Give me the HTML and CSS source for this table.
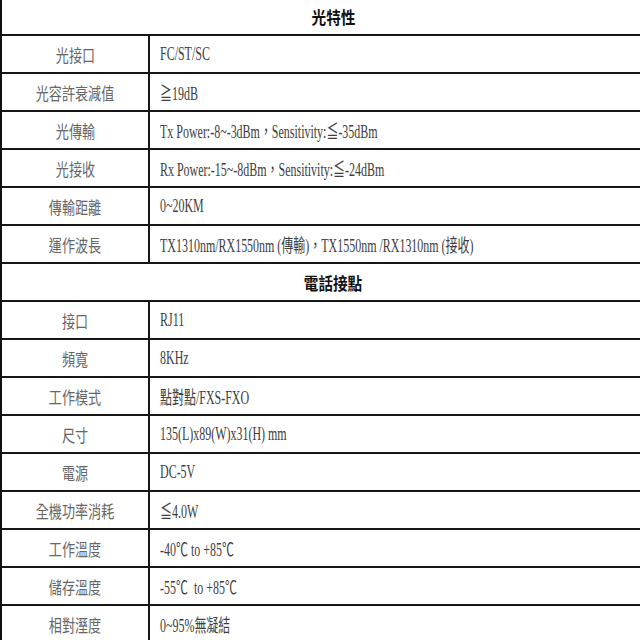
FILE: index.html
```html
<!DOCTYPE html>
<html lang="zh-Hant">
<head>
<meta charset="utf-8">
<link rel="stylesheet" href="styles.css">
</head>
<body>
<div class="spec">
  <div class="row head"><span class="sq-h">光特性</span></div>
  <div class="row"><div class="lbl"><span class="sq-c">光接口</span></div><div class="val"><span class="sq">FC/ST/SC</span></div></div>
  <div class="row"><div class="lbl"><span class="sq-c">光容許衰減值</span></div><div class="val"><span class="sq">≧19dB</span></div></div>
  <div class="row"><div class="lbl"><span class="sq-c">光傳輸</span></div><div class="val"><span class="sq">Tx Power:-8~-3dBm，Sensitivity:≦-35dBm</span></div></div>
  <div class="row"><div class="lbl"><span class="sq-c">光接收</span></div><div class="val"><span class="sq">Rx Power:-15~-8dBm，Sensitivity:≦-24dBm</span></div></div>
  <div class="row"><div class="lbl"><span class="sq-c">傳輸距離</span></div><div class="val"><span class="sq">0~20KM</span></div></div>
  <div class="row"><div class="lbl"><span class="sq-c">運作波長</span></div><div class="val"><span class="sq">TX1310nm/RX1550nm (傳輸)，TX1550nm /RX1310nm (接收)</span></div></div>
  <div class="row head"><span class="sq-h">電話接點</span></div>
  <div class="row"><div class="lbl"><span class="sq-c">接口</span></div><div class="val"><span class="sq">RJ11</span></div></div>
  <div class="row"><div class="lbl"><span class="sq-c">頻寬</span></div><div class="val"><span class="sq">8KHz</span></div></div>
  <div class="row"><div class="lbl"><span class="sq-c">工作模式</span></div><div class="val"><span class="sq">點對點/FXS-FXO</span></div></div>
  <div class="row"><div class="lbl"><span class="sq-c">尺寸</span></div><div class="val"><span class="sq">135(L)x89(W)x31(H) mm</span></div></div>
  <div class="row"><div class="lbl"><span class="sq-c">電源</span></div><div class="val"><span class="sq">DC-5V</span></div></div>
  <div class="row"><div class="lbl"><span class="sq-c">全機功率消耗</span></div><div class="val"><span class="sq">≦4.0W</span></div></div>
  <div class="row"><div class="lbl"><span class="sq-c">工作溫度</span></div><div class="val"><span class="sq">-40℃ to +85℃</span></div></div>
  <div class="row"><div class="lbl"><span class="sq-c">儲存溫度</span></div><div class="val"><span class="sq">-55℃&nbsp; to +85℃</span></div></div>
  <div class="row"><div class="lbl"><span class="sq-c">相對溼度</span></div><div class="val"><span class="sq">0~95%無凝結</span></div></div>
</div>
</body>
</html>
```
FILE: styles.css
```css
html, body {
  margin: 0;
  padding: 0;
  background: #ffffff;
  overflow: hidden;
}
.spec {
  width: 662px;
  margin-top: -4px;
  border-left: 2px solid #111;
  border-top: 2px solid #111;
  font-family: "Liberation Serif", "Noto Sans CJK TC", serif;
  font-size: 18px;
  color: #3e3e3e;
}
.row {
  display: flex;
  height: 38px;
  box-sizing: border-box;
  border-bottom: 2px solid #161616;
}
.row.head {
  align-items: center;
  justify-content: center;
  font-family: "Noto Sans CJK TC", "Liberation Sans", sans-serif;
  font-weight: 700;
  color: #111;
  font-size: 17px;
}
.lbl {
  width: 148px;
  flex: none;
  border-right: 2px solid #161616;
  display: flex;
  align-items: center;
  justify-content: center;
  color: #666;
  padding-top: 1px;
  box-sizing: border-box;
}
.val {
  flex: 1;
  display: flex;
  align-items: center;
  padding-left: 10px;
  white-space: nowrap;
}
.sq {
  display: inline-block;
  transform: scaleX(0.665);
  transform-origin: left center;
}
.sq-c {
  display: inline-block;
  font-size: 17px;
  transform: scaleX(0.77);
  transform-origin: center center;
  white-space: nowrap;
}
.sq-h {
  display: inline-block;
  transform: scaleX(0.86);
  transform-origin: center center;
}
```
